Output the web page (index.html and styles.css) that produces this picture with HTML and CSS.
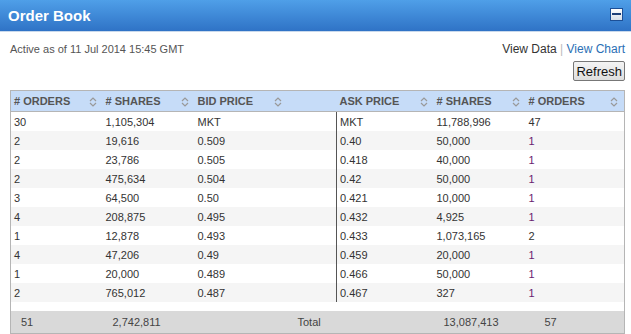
FILE: index.html
```html
<!DOCTYPE html>
<html lang="en">
<head>
  <meta charset="UTF-8">
  <title>Order Book</title>
  <link rel="stylesheet" href="styles.css">
</head>
<body>
  <div class="panel">
    <div class="panel-head">
      <span class="panel-title">Order Book</span>
      <span class="min-btn"><span class="min-bar"></span></span>
    </div>

    <div class="panel-body">
      <div class="top-row">
        <div class="as-of">Active as of 11 Jul 2014 15:45 GMT</div>
        <div class="actions">
          <div class="views">
            <span class="view-data">View Data</span>
            <span class="sep">|</span>
            <span class="view-chart">View Chart</span>
          </div>
          <button class="refresh">Refresh</button>
        </div>
      </div>

      <table class="book">
        <colgroup>
          <col class="c-num">
          <col class="c-num">
          <col class="c-bid">
          <col class="c-gap">
          <col class="c-ask">
          <col class="c-num">
          <col>
        </colgroup>
        <thead>
          <tr>
            <th># ORDERS<span class="sort"></span></th>
            <th># SHARES<span class="sort"></span></th>
            <th>BID PRICE<span class="sort"></span></th>
            <th></th>
            <th>ASK PRICE<span class="sort"></span></th>
            <th># SHARES<span class="sort"></span></th>
            <th># ORDERS<span class="sort"></span></th>
          </tr>
        </thead>
        <tbody id="rows"></tbody>
        <tfoot>
          <tr class="spacer"><td colspan="7"></td></tr>
          <tr class="totals">
            <td>51</td>
            <td>2,742,811</td>
            <td></td>
            <td>Total</td>
            <td></td>
            <td>13,087,413</td>
            <td class="last">57</td>
          </tr>
        </tfoot>
      </table>
    </div>
  </div>

  <script>
    const book = [
      ["30", "1,105,304", "MKT", "MKT", "11,788,996", "47"],
      ["2", "19,616", "0.509", "0.40", "50,000", "1"],
      ["2", "23,786", "0.505", "0.418", "40,000", "1"],
      ["2", "475,634", "0.504", "0.42", "50,000", "1"],
      ["3", "64,500", "0.50", "0.421", "10,000", "1"],
      ["4", "208,875", "0.495", "0.432", "4,925", "1"],
      ["1", "12,878", "0.493", "0.433", "1,073,165", "2"],
      ["4", "47,206", "0.49", "0.459", "20,000", "1"],
      ["1", "20,000", "0.489", "0.466", "50,000", "1"],
      ["2", "765,012", "0.487", "0.467", "327", "1"]
    ];

    const arrows = '<svg width="8" height="10" viewBox="0 0 8 10"><path d="M1 4 L4 1 L7 4 M1 6 L4 9 L7 6" fill="none" stroke="#999" stroke-width="1.2"/></svg>';
    document.querySelectorAll(".sort").forEach(s => s.innerHTML = arrows);

    const tbody = document.getElementById("rows");
    book.forEach(r => {
      const tr = document.createElement("tr");
      const ordersClass = r[5] === "1" ? "ask-orders one" : "ask-orders";
      tr.innerHTML =
        `<td>${r[0]}</td><td>${r[1]}</td><td>${r[2]}</td><td></td>` +
        `<td class="ask">${r[3]}</td><td class="ask-shares">${r[4]}</td><td class="${ordersClass}">${r[5]}</td>`;
      tbody.appendChild(tr);
    });
  </script>
</body>
</html>
```

FILE: styles.css
```css
body {
  margin: 0;
  padding: 0;
  font-family: "Liberation Sans", Arial, sans-serif;
  background: #fff;
  color: #333;
}

.panel-head {
  height: 31px;
  background: linear-gradient(#4f9fe8, #2f73c6);
  border-bottom: 1px solid #c9d9ec;
  display: flex;
  align-items: center;
  justify-content: space-between;
  padding: 0 8px 0 8px;
}

.panel-title {
  color: #fff;
  font-weight: bold;
  font-size: 15px;
  margin-top: -1px;
}

.min-btn {
  width: 11px;
  height: 11px;
  border: 1px solid #1c4f96;
  background: linear-gradient(#ffffff, #d6dee8);
  display: flex;
  align-items: center;
  justify-content: center;
  margin-top: -3px;
}

.min-bar {
  width: 9px;
  height: 2px;
  background: #1d3f78;
}

.panel-body {
  padding: 0 6px 0 10px;
}

.top-row {
  display: flex;
  justify-content: space-between;
  align-items: flex-start;
  height: 58px;
}

.as-of {
  font-size: 11px;
  color: #555;
  margin-top: 11px;
}

.actions {
  display: flex;
  flex-direction: column;
  align-items: flex-end;
  margin-top: 10px;
}

.views {
  font-size: 12px;
}

.view-data {
  color: #333;
}

.sep {
  color: #bbb;
}

.view-chart {
  color: #2a6fb5;
}

.refresh {
  margin-top: 5px;
  font-family: "Liberation Sans", Arial, sans-serif;
  font-size: 13px;
  color: #111;
  padding: 1px 2px;
  height: 20px;
  border: 1px solid #777;
  border-radius: 2px;
  background: linear-gradient(#f4f4f4, #dedede);
}

.book {
  width: 100%;
  border-collapse: collapse;
  table-layout: fixed;
  font-size: 11px;
  border-left: 1px solid #b5b5b5;
  border-right: 1px solid #b5b5b5;
  border-bottom: 1px solid #b5b5b5;
}

.c-num {
  width: 92px;
}

.c-bid {
  width: 93px;
}

.c-gap {
  width: 49px;
}

.c-ask {
  width: 97px;
}

.book th {
  height: 20px;
  background: #c6dcf8;
  border-top: 1px solid #b5b5b5;
  border-bottom: 1px solid #b5b5b5;
  color: #555;
  font-weight: bold;
  text-align: left;
  padding: 0 0 0 3px;
  position: relative;
}

.sort {
  position: absolute;
  right: 6px;
  top: 6px;
  line-height: 0;
}

.book tbody td {
  height: 19px;
  padding: 0 0 0 3px;
  color: #333;
}

.book tbody tr:nth-child(even) {
  background: #f5f5f5;
}

.book tbody td.ask {
  border-left: 1px solid #555;
}

.ask-shares {
  color: #3a2a52;
}

.ask-orders.one {
  color: #6a1b70;
}

.spacer td {
  height: 9px;
  padding: 0;
}

.totals td {
  height: 22px;
  background: #d9d9d9;
  color: #444;
  padding: 0 0 0 10px;
}

.totals td.last {
  padding-left: 19px;
}
```
